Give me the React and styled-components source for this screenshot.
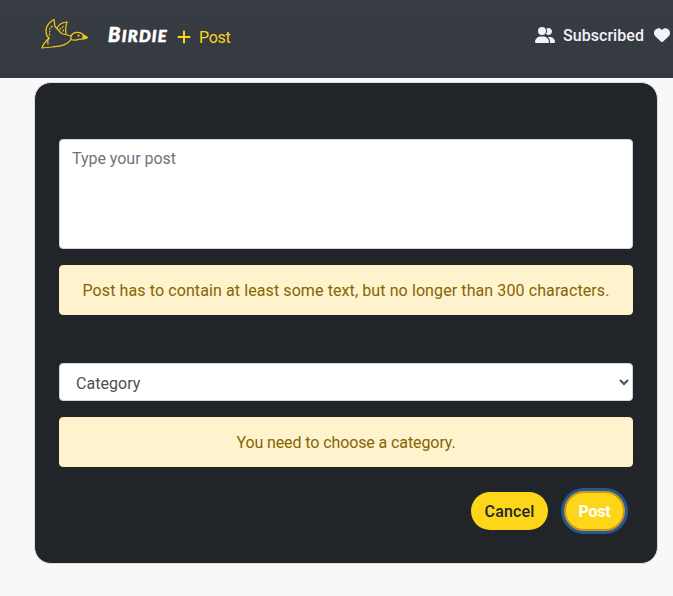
import React from 'react';
import styled, { createGlobalStyle } from 'styled-components';
import { FaUserGroup, FaHeart, FaPlus } from 'react-icons/fa6';

const GlobalStyle = createGlobalStyle`
  *, *::before, *::after { box-sizing: border-box; }
  body {
    margin: 0;
    background: #f8f8f8;
    font: 400 16px/24px Roboto, sans-serif;
    overflow: hidden;
  }
  #root { min-height: 596px; }
`;

const Header = styled.header`
  height: 78px;
  display: flex;
  align-items: flex-start;
  padding: 0 3px 0 40px;
  background: linear-gradient(#383c44, #343a40);
  white-space: nowrap;
`;

const Logo = styled.svg`
  width: 50px;
  height: 34px;
  margin-top: 17px;
  fill: none;
  stroke: #ecc91d;
  stroke-width: 1.25;
  stroke-linecap: round;
  stroke-linejoin: round;
`;

const Brand = styled.span`
  width: 60px;
  margin: 22px 0 0 18px;
  color: #fff;
  font: italic 900 16.5px/24px Lato, sans-serif;
  text-transform: uppercase;
  letter-spacing: 1.25px;
  -webkit-text-stroke: 0.6px #fff;
  &::first-letter { font-size: 20px; }
`;

const AddPost = styled.a`
  display: flex;
  align-items: center;
  gap: 7px;
  margin: 25px 0 0 8px;
  height: 24px;
  color: #fbd51a;
  letter-spacing: -0.3px;
  svg { width: 16px; height: 16px; }
  span { padding-top: 2px; }
`;

const Navigation = styled.nav`
  display: flex;
  align-items: center;
  margin: 23px 0 0 auto;
  height: 24px;
  color: #f3f1fa;
`;

const NavLabel = styled.span`
  width: 82px;
  margin: 1px 9px 0 8px;
  font-weight: 500;
  letter-spacing: 0.05px;
`;

const Card = styled.form`
  width: 624px;
  height: 482px;
  margin: 4px 0 0 34px;
  padding: 56px 24px 0;
  display: flex;
  flex-direction: column;
  background: #212529;
  border: 1px solid #dcdddf;
  border-radius: 17px;
`;

const PostInput = styled.textarea`
  display: block;
  width: 100%;
  height: 110px;
  padding: 7px 12px 5px;
  border: 1px solid #ced4da;
  border-radius: 4px;
  background: #fff;
  color: #495057;
  font: inherit;
  letter-spacing: -0.03px;
  resize: none;
  &::placeholder { color: #6c757d; opacity: 1; }
`;

const Warning = styled.div`
  height: 50px;
  margin: 16px 0 0;
  padding: 13px 0 0;
  border: 1px solid #ffeeba;
  border-radius: 4px;
  background: #fff3cd;
  color: #856404;
  text-align: center;
  white-space: nowrap;
  letter-spacing: ${({ $tracking }) => $tracking};
`;

const CategorySelect = styled.select`
  width: 100%;
  height: 38px;
  margin-top: 48px;
  padding: 8px 11px 6px 12px;
  border: 1px solid #ced4da;
  border-radius: 4px;
  background: #fff;
  color: #495057;
  font: inherit;
  letter-spacing: 0.05px;
`;

const Actions = styled.div`
  display: flex;
  align-items: center;
  justify-content: flex-end;
  gap: 16px;
  margin-top: 24px;
  padding-right: 8px;
`;

const Button = styled.button`
  width: ${({ $primary }) => ($primary ? '61px' : '77px')};
  height: ${({ $primary }) => ($primary ? '40px' : '38px')};
  padding: 2px 0 0;
  border: ${({ $primary }) => ($primary ? '2px solid #d39413' : '0')};
  border-radius: 20px;
  background: #fdd61a;
  color: ${({ $primary }) => ($primary ? '#fff' : '#212529')};
  box-shadow: ${({ $primary }) => ($primary ? '0 0 0 3px #235a96' : 'none')};
  font: inherit;
  font-weight: ${({ $primary }) => ($primary ? 700 : 500)};
  letter-spacing: ${({ $primary }) => ($primary ? '-0.2px' : '0.15px')};
`;

function BirdLogo() {
  return (
    <Logo viewBox="0 0 50 34" aria-label="Birdie">
      <path d="M2 31 Q3 27 9 21 L7 19 C4 11 8 6 14 2.5 L15 9.5 L21.5 16.5 L31 19 C33 15 39 14 43 17.5 L47.5 20.5 Q45 22.5 40 22 Q35 24 31 22.5 C27 29 18 29 12 30 L2 31Z" />
      <path d="M17 11 Q20 5.5 27 5 Q25 10 26 17 M9 21 Q7 24 8 27 M31 19 L31 22" />
      <path d="M9.5 18 L10 11 L13 8.5 M20 12 L24 9 M23 14 L24 12" strokeDasharray="1 2" />
      <circle cx="38.5" cy="18.5" r=".5" />
      <path d="M43 18.5 L47.5 20.5 L43 21.5Z" fill="#ecc91d" />
    </Logo>
  );
}

export default function App() {
  return (
    <>
      <GlobalStyle />
      <Header>
        <BirdLogo />
        <Brand>Birdie</Brand>
        <AddPost><FaPlus /><span>Post</span></AddPost>
        <Navigation>
          <FaUserGroup size={20} />
          <NavLabel>Subscribed</NavLabel>
          <FaHeart size={16} />
        </Navigation>
      </Header>
      <Card>
        <PostInput placeholder="Type your post" />
        <Warning $tracking="0.1px">Post has to contain at least some text, but no longer than 300 characters.</Warning>
        <CategorySelect defaultValue="category">
          <option value="category">Category</option>
        </CategorySelect>
        <Warning $tracking="-0.1px">You need to choose a category.</Warning>
        <Actions>
          <Button type="button">Cancel</Button>
          <Button type="button" $primary>Post</Button>
        </Actions>
      </Card>
    </>
  );
}
